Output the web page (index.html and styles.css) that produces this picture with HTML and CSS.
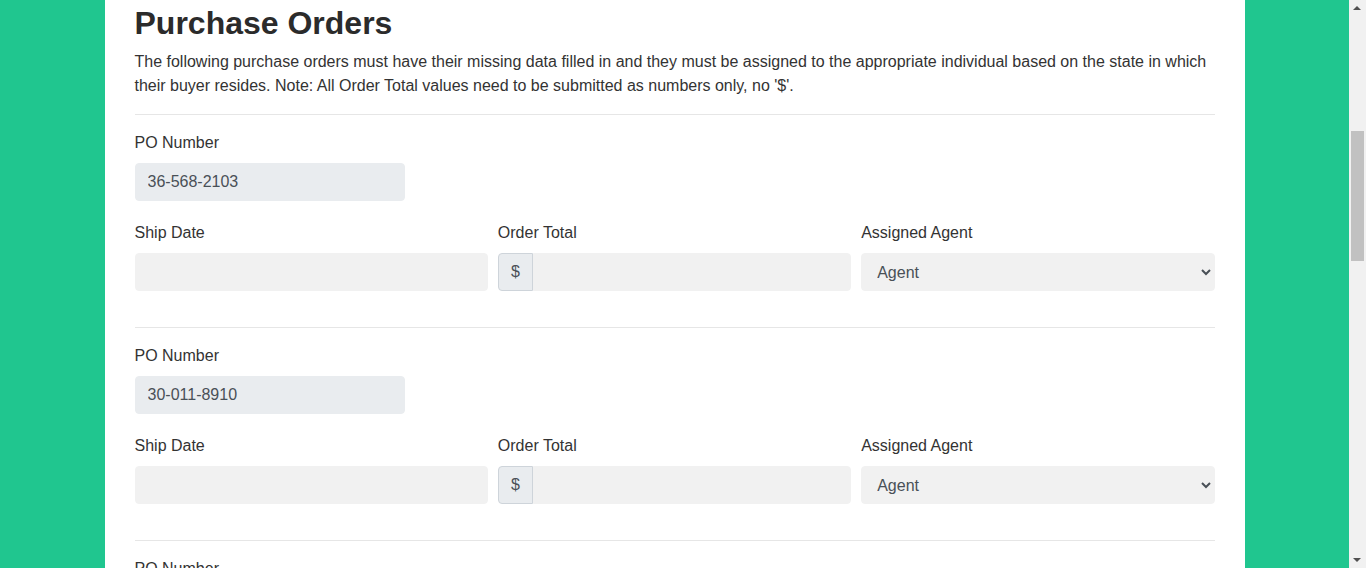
FILE: index.html
```html
<!DOCTYPE html>
<html lang="en">
<head>
<meta charset="utf-8">
<title>Purchase Orders</title>
<link rel="stylesheet" href="styles.css">
</head>
<body>
<main class="container">
  <h2 class="title">Purchase Orders</h2>
  <p class="intro">The following purchase orders must have their missing data filled in and they must be assigned to the appropriate individual based on the state in which their buyer resides. Note: All Order Total values need to be submitted as numbers only, no '$'.</p>

  <section class="po">
    <div class="field po-number"><label>PO Number</label><input type="text" value="36-568-2103" readonly></div>
    <div class="po-row">
      <div class="field"><label>Ship Date</label><input type="text"></div>
      <div class="field"><label>Order Total</label><div class="input-group"><span class="addon">$</span><input type="text"></div></div>
      <div class="field"><label>Assigned Agent</label><select><option>Agent</option></select></div>
    </div>
  </section>

  <section class="po">
    <div class="field po-number"><label>PO Number</label><input type="text" value="30-011-8910" readonly></div>
    <div class="po-row">
      <div class="field"><label>Ship Date</label><input type="text"></div>
      <div class="field"><label>Order Total</label><div class="input-group"><span class="addon">$</span><input type="text"></div></div>
      <div class="field"><label>Assigned Agent</label><select><option>Agent</option></select></div>
    </div>
  </section>

  <section class="po">
    <div class="field po-number"><label>PO Number</label><input type="text" value="54-720-1187" readonly></div>
  </section>
</main>

<div class="scrollbar" aria-hidden="true">
  <span class="arrow up"></span>
  <span class="thumb"></span>
  <span class="arrow down"></span>
</div>
</body>
</html>
```

FILE: styles.css
```css
html, body {
  margin: 0;
  padding: 0;
}

body {
  background: #20c68f;
  font-family: "Liberation Sans", Arial, sans-serif;
  font-size: 16px;
  line-height: 1.5;
  color: #333;
  margin-right: 17px;
  height: 568px;
  overflow: hidden;
}

.container {
  width: 1140px;
  margin: 0 auto;
  background: #fff;
  padding: 4px 30px 40px;
  box-sizing: border-box;
}

.title {
  margin: 0 0 8px;
  font-size: 32px;
  line-height: 1.2;
  font-weight: bold;
  color: #2b2b2b;
}

.intro {
  margin: 0 0 16px;
}

.po {
  border-top: 1px solid #e6e6e6;
  padding: 16px 0 36px;
}

.field label {
  display: block;
  margin-bottom: 8px;
}

.field input,
.field select {
  display: block;
  box-sizing: border-box;
  width: 100%;
  height: 38px;
  padding: 6px 12px;
  font-family: inherit;
  font-size: 16px;
  line-height: 1.5;
  color: #495057;
  background: #f1f1f1;
  border: 1px solid #f1f1f1;
  border-radius: 4px;
  outline: none;
}

.po-number input {
  width: 270px;
  background: #e9ecef;
  border-color: #e9ecef;
}

.po-row {
  display: grid;
  grid-template-columns: repeat(3, 1fr);
  gap: 10px;
  margin-top: 20px;
}

.input-group {
  display: flex;
}

.addon {
  box-sizing: border-box;
  width: 35px;
  height: 38px;
  padding: 6px 0;
  text-align: center;
  color: #495057;
  background: #e9ecef;
  border: 1px solid #ced4da;
  border-radius: 4px 0 0 4px;
}

.input-group input {
  flex: 1;
  min-width: 0;
  border-radius: 0 4px 4px 0;
}

.field select {
  padding: 6px 13px 6px 11px;
}

/* mock of the browser's vertical scrollbar (page scrolled part way) */
.scrollbar {
  position: fixed;
  top: 0;
  right: 0;
  width: 17px;
  height: 100%;
  background: #f1f1f1;
}

.arrow {
  position: absolute;
  left: 4px;
  width: 0;
  height: 0;
  border-left: 4px solid transparent;
  border-right: 4px solid transparent;
}

.arrow.up {
  top: 6px;
  border-bottom: 4px solid #505050;
}

.arrow.down {
  bottom: 6px;
  border-top: 4px solid #505050;
}

.thumb {
  position: absolute;
  top: 131px;
  left: 2px;
  width: 13px;
  height: 130px;
  background: #c1c1c1;
}
```
